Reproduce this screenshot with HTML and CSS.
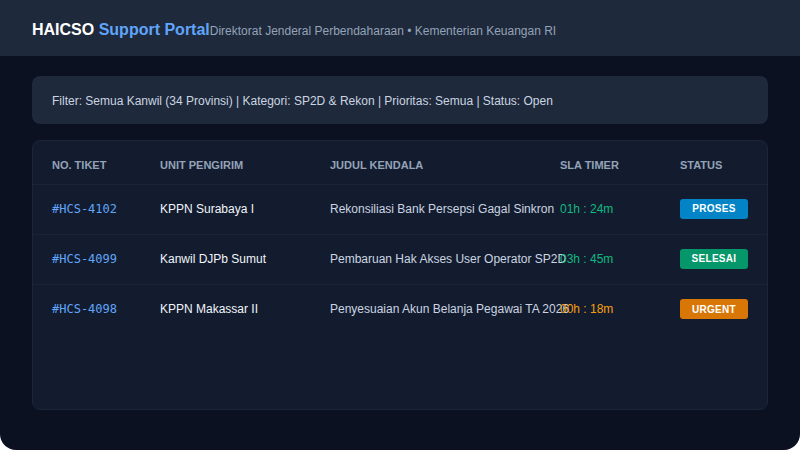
FILE: index.html
```html
<!DOCTYPE html>
<html lang="id">
<head>
<meta charset="utf-8">
<title>HAICSO Support Portal</title>
<link rel="stylesheet" href="styles.css">
</head>
<body>
<div class="app">
  <header class="topbar">
    <span class="brand">HAICSO <span class="brand-accent">Support Portal</span></span>
    <span class="subtitle">Direktorat Jenderal Perbendaharaan • Kementerian Keuangan RI</span>
  </header>
  <main class="main">
    <div class="filter">Filter: Semua Kanwil (34 Provinsi) | Kategori: SP2D &amp; Rekon | Prioritas: Semua | Status: Open</div>
    <section class="table">
      <div class="row head">
        <div>NO. TIKET</div>
        <div>UNIT PENGIRIM</div>
        <div>JUDUL KENDALA</div>
        <div>SLA TIMER</div>
        <div>STATUS</div>
      </div>
      <div class="row">
        <div class="id">#HCS-4102</div>
        <div class="unit">KPPN Surabaya I</div>
        <div class="title">Rekonsiliasi Bank Persepsi Gagal Sinkron</div>
        <div class="sla ok">01h : 24m</div>
        <div><span class="badge proses">PROSES</span></div>
      </div>
      <div class="row">
        <div class="id">#HCS-4099</div>
        <div class="unit">Kanwil DJPb Sumut</div>
        <div class="title">Pembaruan Hak Akses User Operator SP2D</div>
        <div class="sla ok">03h : 45m</div>
        <div><span class="badge selesai">SELESAI</span></div>
      </div>
      <div class="row last">
        <div class="id">#HCS-4098</div>
        <div class="unit">KPPN Makassar II</div>
        <div class="title">Penyesuaian Akun Belanja Pegawai TA 2026</div>
        <div class="sla warn">00h : 18m</div>
        <div><span class="badge urgent">URGENT</span></div>
      </div>
    </section>
  </main>
</div>
</body>
</html>
```

FILE: styles.css
```css
* { box-sizing: border-box; }
html, body { margin: 0; padding: 0; background: #ffffff; }
body { font-family: "Liberation Sans", Arial, sans-serif; }
.app {
  width: 800px;
  height: 450px;
  background: #0b1120;
  border-radius: 0 0 16px 16px;
  overflow: hidden;
  display: flex;
  flex-direction: column;
}
.topbar {
  height: 56px;
  flex: none;
  background: #1e293b;
  display: flex;
  align-items: center;
  padding: 3px 32px 0;
}
.brand {
  font-size: 16px;
  font-weight: 700;
  color: #ffffff;
}
.brand-accent { color: #60a5fa; }
.subtitle {
  font-size: 12px;
  color: #94a3b8;
  margin-top: 2px;
}
.main {
  flex: 1;
  display: flex;
  flex-direction: column;
  gap: 16px;
  padding: 20px 32px 40px;
}
.filter {
  height: 48px;
  flex: none;
  background: #1e293b;
  border-radius: 8px;
  padding: 1px 20px 0;
  display: flex;
  align-items: center;
  font-size: 12px;
  color: #cbd5e1;
}
.table {
  flex: 1;
  background: #131c2f;
  border: 1px solid #1c2638;
  border-radius: 8px;
}
.row {
  display: grid;
  grid-template-columns: 108px 170px 230px 120px 1fr;
  align-items: center;
  height: 50px;
  padding: 0 19px 2px;
  border-bottom: 1px solid #1a2436;
  font-size: 12px;
  white-space: nowrap;
}
.row.head {
  height: 44px;
  font-size: 11px;
  font-weight: 700;
  color: #94a3b8;
  padding-top: 5px;
  padding-bottom: 0;
}
.row.last { border-bottom: none; }
.id {
  font-family: "DejaVu Sans Mono", "Liberation Mono", monospace;
  color: #60a5fa;
  font-size: 12px;
}
.unit { color: #f1f5f9; }
.title { color: #cbd5e1; }
.sla.ok { color: #10b981; }
.sla.warn { color: #f59e0b; }
.badge {
  display: inline-flex;
  align-items: center;
  justify-content: center;
  width: 68px;
  height: 20px;
  border-radius: 3px;
  font-size: 10px;
  font-weight: 700;
  color: #ffffff;
  letter-spacing: 0.3px;
}
.badge.proses { background: #0284c7; }
.badge.selesai { background: #059669; }
.badge.urgent { background: #d97706; }
```
